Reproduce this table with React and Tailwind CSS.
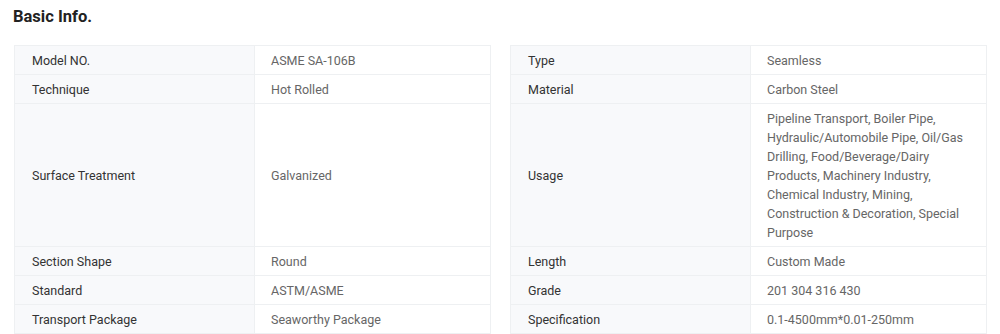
const rows = [
	[ 'Model NO.', 'ASME SA-106B', 'Type', 'Seamless' ],
	[ 'Technique', 'Hot Rolled', 'Material', 'Carbon Steel' ],
	[
		'Surface Treatment',
		'Galvanized',
		'Usage',
		'Pipeline Transport, Boiler Pipe, Hydraulic/Automobile Pipe, Oil/Gas Drilling, Food/Beverage/Dairy Products, Machinery Industry, Chemical Industry, Mining, Construction & Decoration, Special Purpose',
	],
	[ 'Section Shape', 'Round', 'Length', 'Custom Made' ],
	[ 'Standard', 'ASTM/ASME', 'Grade', '201 304 316 430' ],
	[ 'Transport Package', 'Seaworthy Package', 'Specification', '0.1-4500mm*0.01-250mm' ],
];

const Label = ( { children, first } ) => (
	<div
		className={ `flex items-center bg-[#f8f9fb] border-l border-b border-[#eef0f2] pl-[17px] pr-3 pt-[5px] pb-[4px] text-[#333] ${
			first ? 'border-t' : ''
		}` }
	>
		{ children }
	</div>
);

const Value = ( { children, first } ) => (
	<div
		className={ `flex items-center bg-white border-l border-r border-b border-[#eef0f2] pl-4 pr-4 pt-[5px] pb-[4px] text-[#666] ${
			first ? 'border-t' : ''
		}` }
	>
		{ children }
	</div>
);

export default function App() {
	return (
		<div className="w-[1000px] h-[334px] bg-white font-['Roboto',sans-serif] text-[12.5px] leading-[19px] overflow-hidden">
			<h2 className="pl-[13px] pt-[5px] text-[16.5px] leading-[24px] font-bold text-[#222]">
				Basic Info.
			</h2>
			<div className="grid grid-cols-[240px_237px_19px_240px_237px] ml-[14px] mt-[16px]">
				{ rows.map( ( [ l1, v1, l2, v2 ], i ) => (
					<div key={ l1 } className="contents">
						<Label first={ i === 0 }>{ l1 }</Label>
						<Value first={ i === 0 }>{ v1 }</Value>
						<div />
						<Label first={ i === 0 }>{ l2 }</Label>
						<Value first={ i === 0 }>{ v2 }</Value>
					</div>
				) ) }
			</div>
		</div>
	);
}
